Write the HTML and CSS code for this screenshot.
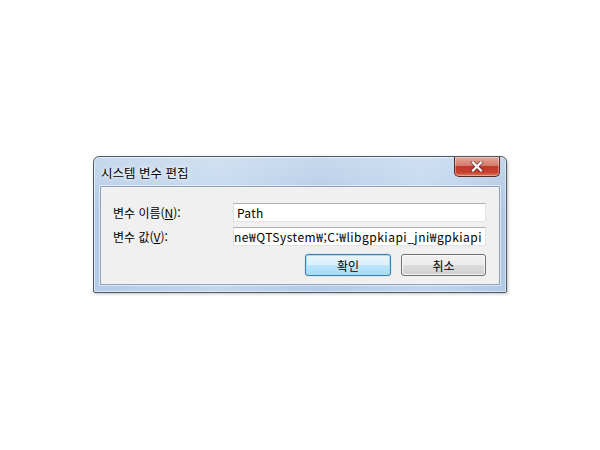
FILE: index.html
```html
<!DOCTYPE html>
<html lang="ko">
<head>
<meta charset="utf-8">
<title>시스템 변수 편집</title>
<link rel="stylesheet" href="styles.css">
</head>
<body>
<div class="desktop">
  <div class="window">
    <div class="titlebar">
      <span class="title">시스템 변수 편집</span>
      <div class="close" aria-label="닫기">
        <svg width="14" height="11" viewBox="0 0 14 11">
          <path d="M3 1.5 L11 9.5 M11 1.5 L3 9.5" stroke="#3a2020" stroke-width="4" stroke-linecap="square" fill="none" opacity="0.55"/>
          <path d="M3 1.5 L11 9.5 M11 1.5 L3 9.5" stroke="#ffffff" stroke-width="2.2" stroke-linecap="square" fill="none"/>
        </svg>
      </div>
    </div>
    <div class="client">
      <div class="form">
        <label class="label">변수 이름(<u>N</u>):</label>
        <div class="field"><span class="value">Path</span></div>
        <label class="label">변수 값(<u>V</u>):</label>
        <div class="field"><span class="value shifted">ne₩QTSystem₩;C:₩libgpkiapi_jni₩gpkiapi</span></div>
      </div>
      <div class="buttons">
        <div class="btn default">확인</div>
        <div class="btn">취소</div>
      </div>
    </div>
  </div>
</div>
</body>
</html>
```

FILE: styles.css
```css
html, body {
  margin: 0;
  padding: 0;
  background: #ffffff;
}

.desktop {
  width: 600px;
  height: 450px;
  padding: 156px 0 0 93px;
  box-sizing: border-box;
  font-family: "Noto Sans CJK KR", "Noto Sans", sans-serif;
  font-size: 12px;
  color: #000;
}

.window {
  width: 414px;
  height: 137px;
  box-sizing: border-box;
  border: 1px solid #4d5a66;
  border-radius: 6px 6px 2px 2px;
  background:
    linear-gradient(180deg, rgba(255,255,255,0.25) 0%, rgba(255,255,255,0) 40%),
    linear-gradient(90deg, #b4cce7 0%, #c2d7ee 30%, #b3cbe6 55%, #c0d6ee 80%, #b0c9e5 100%);
  box-shadow: inset 0 0 0 1px rgba(255,255,255,0.55), 1px 1px 3px rgba(0,0,0,0.25);
  display: flex;
  flex-direction: column;
  padding: 0 6px 7px 6px;
}

.titlebar {
  height: 29px;
  display: flex;
  align-items: center;
  justify-content: space-between;
}

.title {
  padding-left: 1px;
  padding-top: 2px;
  font-size: 12.5px;
  text-shadow: 0 0 6px #ffffff, 0 0 3px #ffffff;
}

.close {
  align-self: flex-start;
  width: 46px;
  height: 20px;
  box-sizing: border-box;
  border: 1px solid #5a2a24;
  border-top: none;
  border-radius: 0 0 5px 5px;
  background:
    linear-gradient(180deg, #e8a79a 0%, #d47a6b 45%, #c0392b 50%, #c7402f 80%, #dd7a5c 100%);
  box-shadow: inset 0 0 0 1px rgba(255,255,255,0.35);
  display: flex;
  align-items: center;
  justify-content: center;
}

.client {
  flex: 1;
  background: #f0f0f0;
  border: 1px solid #8fa5bd;
  box-shadow: 0 0 0 1px rgba(255,255,255,0.5);
  padding: 16px 13px 8px 12px;
  display: flex;
  flex-direction: column;
}

.form {
  display: grid;
  grid-template-columns: 120px 1fr;
  row-gap: 5px;
  align-items: center;
}

.label {
  line-height: 19px;
}

.field {
  height: 19px;
  box-sizing: border-box;
  background: #ffffff;
  border: 1px solid #e2e3ea;
  border-top-color: #abadb3;
  border-left-color: #dbdfe6;
  overflow: hidden;
  white-space: nowrap;
  display: flex;
  align-items: center;
  padding-left: 3px;
}

.value {
  line-height: 17px;
  letter-spacing: 0.3px;
}

.shifted {
  margin-left: -3px;
  letter-spacing: 0.5px;
}

.buttons {
  display: flex;
  justify-content: flex-end;
  gap: 10px;
  margin-top: 8px;
}

.btn {
  width: 85px;
  height: 22px;
  box-sizing: border-box;
  border: 1px solid #707070;
  border-radius: 3px;
  background: linear-gradient(180deg, #f2f2f2 0%, #ebebeb 49%, #dddddd 50%, #cfcfcf 100%);
  box-shadow: inset 0 0 0 1px rgba(255,255,255,0.7);
  display: flex;
  align-items: center;
  justify-content: center;
}

.default {
  width: 86px;
  border-color: #3c7fb1;
  background: linear-gradient(180deg, #eaf6fd 0%, #d9f0fc 49%, #bee6fd 50%, #a7d9f5 100%);
  box-shadow: inset 0 0 0 1px #9ee0fb, 0 0 1px #48a8e0;
}
```
